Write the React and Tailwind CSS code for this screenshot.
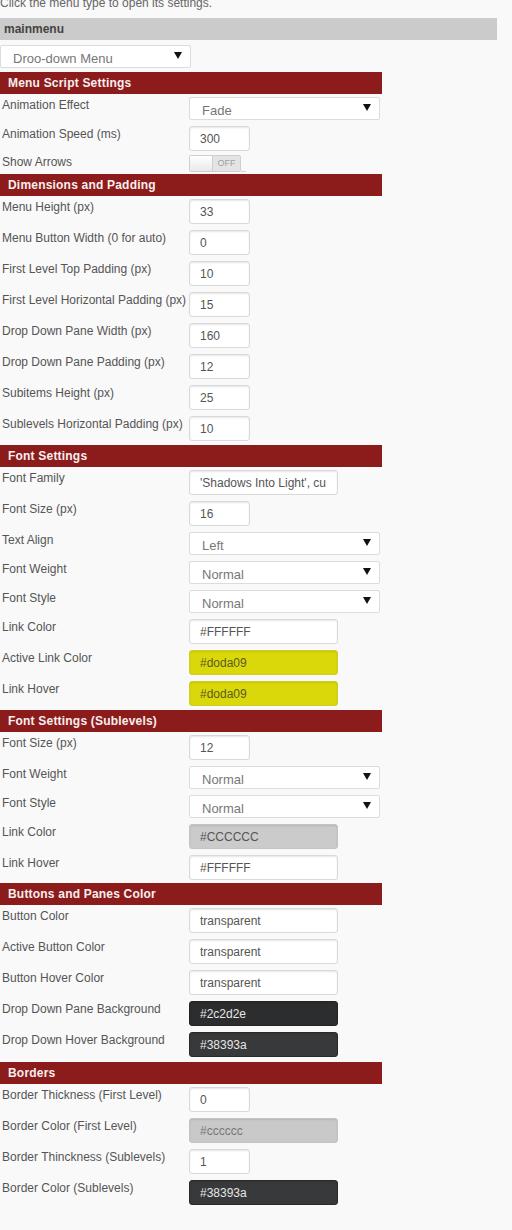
import React from 'react';

const sections = [
  {
    title: 'Menu Script Settings',
    mt: 'mt-[4px]',
    rows: [
      { label: 'Animation Effect', type: 'select', value: 'Fade' },
      { label: 'Animation Speed (ms)', type: 'short', value: '300' },
      { label: 'Show Arrows', type: 'toggle' },
    ],
  },
  {
    title: 'Dimensions and Padding',
    mt: 'mt-0',
    rows: [
      { label: 'Menu Height (px)', type: 'short', value: '33' },
      { label: 'Menu Button Width (0 for auto)', type: 'short', value: '0' },
      { label: 'First Level Top Padding (px)', type: 'short', value: '10' },
      { label: 'First Level Horizontal Padding (px)', type: 'short', value: '15' },
      { label: 'Drop Down Pane Width (px)', type: 'short', value: '160' },
      { label: 'Drop Down Pane Padding (px)', type: 'short', value: '12' },
      { label: 'Subitems Height (px)', type: 'short', value: '25' },
      { label: 'Sublevels Horizontal Padding (px)', type: 'short', value: '10' },
    ],
  },
  {
    title: 'Font Settings',
    mt: 'mt-[1px]',
    rows: [
      { label: 'Font Family', type: 'long', value: "'Shadows Into Light', cu" },
      { label: 'Font Size (px)', type: 'short', value: '16' },
      { label: 'Text Align', type: 'select', value: 'Left' },
      { label: 'Font Weight', type: 'select', value: 'Normal' },
      { label: 'Font Style', type: 'select', value: 'Normal' },
      { label: 'Link Color', type: 'long', value: '#FFFFFF' },
      { label: 'Active Link Color', type: 'long', value: '#doda09', tone: 'yellow' },
      { label: 'Link Hover', type: 'long', value: '#doda09', tone: 'yellow' },
    ],
  },
  {
    title: 'Font Settings (Sublevels)',
    mt: 'mt-[1px]',
    rows: [
      { label: 'Font Size (px)', type: 'short', value: '12' },
      { label: 'Font Weight', type: 'select', value: 'Normal' },
      { label: 'Font Style', type: 'select', value: 'Normal' },
      { label: 'Link Color', type: 'long', value: '#CCCCCC', tone: 'gray' },
      { label: 'Link Hover', type: 'long', value: '#FFFFFF' },
    ],
  },
  {
    title: 'Buttons and Panes Color',
    mt: 'mt-0',
    rows: [
      { label: 'Button Color', type: 'long', value: 'transparent' },
      { label: 'Active Button Color', type: 'long', value: 'transparent' },
      { label: 'Button Hover Color', type: 'long', value: 'transparent' },
      { label: 'Drop Down Pane Background', type: 'long', value: '#2c2d2e', tone: 'dark1' },
      { label: 'Drop Down Hover Background', type: 'long', value: '#38393a', tone: 'dark2' },
    ],
  },
  {
    title: 'Borders',
    mt: 'mt-[2px]',
    rows: [
      { label: 'Border Thickness (First Level)', type: 'short', value: '0' },
      { label: 'Border Color (First Level)', type: 'long', value: '#cccccc', tone: 'light' },
      { label: 'Border Thinckness (Sublevels)', type: 'short', value: '1' },
      { label: 'Border Color (Sublevels)', type: 'long', value: '#38393a', tone: 'dark2' },
    ],
  },
];

const tones = {
  white: 'bg-white border-[#d9d9d9] text-[#555]',
  yellow: 'bg-[#dad80a] border-[#d0ce20] text-[#5a5a20]',
  gray: 'bg-[#cbcbcb] border-[#c4c4c4] text-[#555]',
  light: 'bg-[#c9c9c9] border-[#c4c4c4] text-[#777]',
  dark1: 'bg-[#2c2d2e] border-[#232323] text-[#e6e6e6]',
  dark2: 'bg-[#38393a] border-[#2a2a2a] text-[#e6e6e6]',
};

function Arrow() {
  return (
    <svg width="8" height="7" viewBox="0 0 8 7" className="mb-[3px] shrink-0">
      <polygon points="0,0 8,0 4,7" fill="#111" />
    </svg>
  );
}

function Select({ value, width }) {
  return (
    <div className={`${width} h-[23px] bg-white border border-[#dcdcdc] rounded-[2px] flex items-center justify-between pl-[12px] pr-[8px]`}>
      <span className="text-[13px] leading-[14px] text-[#777] mt-[4px]">{value}</span>
      <Arrow />
    </div>
  );
}

function Field({ row }) {
  if (row.type === 'select') return <Select value={row.value} width="w-[191px]" />;
  if (row.type === 'toggle') {
    return (
      <div className="flex items-end">
        <div className="w-[52px] h-[17px] flex border border-[#cfcfcf] rounded-[2px] overflow-hidden">
          <div className="w-[22px] bg-gradient-to-b from-white to-[#e9e9e9]"></div>
          <div className="flex-1 bg-[#e4e4e4] border-l border-[#cfcfcf] flex items-center justify-center text-[9px] text-[#a0a0a0] leading-none">
            OFF
          </div>
        </div>
        <div className="w-[5px] h-px bg-[#d5d5d5]"></div>
      </div>
    );
  }
  const w = row.type === 'short' ? 'w-[61px]' : 'w-[149px]';
  const tone = tones[row.tone || 'white'];
  return (
    <div className={`${w} h-[25px] border rounded-[3px] shadow-[inset_0_1px_2px_rgba(0,0,0,0.1)] flex items-center pl-[10px] text-[12px] leading-none whitespace-nowrap overflow-hidden ${tone}`}>
      {row.value}
    </div>
  );
}

function Row({ row }) {
  const h = row.type === 'select' ? 'h-[29px] pt-[3px]' : row.type === 'toggle' ? 'h-[20px] pt-[1px]' : 'h-[31px] pt-[3px]';
  const labelMt = row.type === 'toggle' ? 'mt-0' : 'mt-[1px]';
  return (
    <div className={`flex items-start ${h}`}>
      <div className={`w-[189px] shrink-0 pl-[2px] text-[12px] leading-[14px] text-[#555] whitespace-nowrap ${labelMt}`}>
        {row.label}
      </div>
      <Field row={row} />
    </div>
  );
}

export default function App() {
  return (
    <div className="min-h-[1230px] bg-[#f9f9f9] flex flex-col overflow-hidden" style={{ fontFamily: '"Liberation Sans", Arial, sans-serif' }}>
      <div className="-mt-[3px] h-[13px] leading-[13px] text-[12px] text-[#666] mb-[8px] whitespace-nowrap">
        Click the menu type to open its settings.
      </div>
      <div className="w-[497px] h-[22px] bg-[#cbcbcb] flex items-center pl-[4px] text-[12px] font-bold text-[#444]">
        mainmenu
      </div>
      <div className="mt-[5px]">
        <Select value="Droo-down Menu" width="w-[191px]" />
      </div>
      {sections.map((s) => (
        <div key={s.title} className="flex flex-col">
          <div className={`${s.mt} w-[382px] h-[22px] bg-[#8c1c1c] flex items-center pl-[8px] text-[12px] font-bold text-[#f8efef] tracking-[0.2px]`}>
            {s.title}
          </div>
          {s.rows.map((r, i) => (
            <Row key={i} row={r} />
          ))}
        </div>
      ))}
    </div>
  );
}
